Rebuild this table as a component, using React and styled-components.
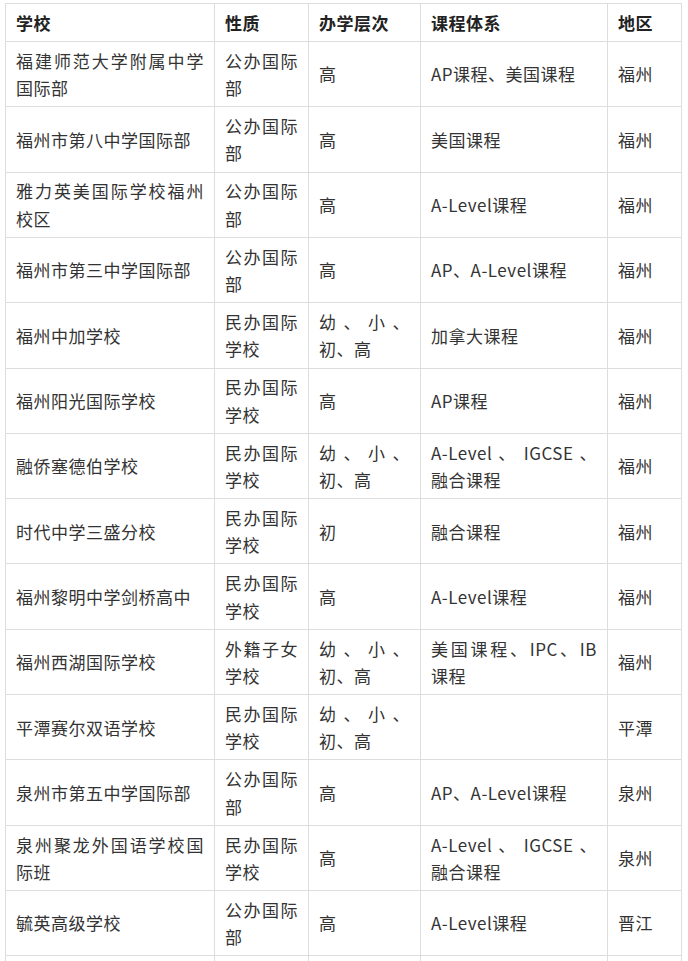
import React from "react";
import styled, { createGlobalStyle } from "styled-components";

const GlobalStyle = createGlobalStyle`
  body {
    margin: 0;
    background: #fff;
    font-family: "Noto Sans CJK SC", "Noto Sans", sans-serif;
  }
`;

const columns = [
  { key: "name", title: "学校", width: 209 },
  { key: "type", title: "性质", width: 94 },
  { key: "level", title: "办学层次", width: 112 },
  { key: "course", title: "课程体系", width: 187 },
  { key: "area", title: "地区", width: 74 },
];

const schools = [
  ["福建师范大学附属中学国际部", "公办国际部", "高", "AP课程、美国课程", "福州"],
  ["福州市第八中学国际部", "公办国际部", "高", "美国课程", "福州"],
  ["雅力英美国际学校福州校区", "公办国际部", "高", "A-Level课程", "福州"],
  ["福州市第三中学国际部", "公办国际部", "高", "AP、A-Level课程", "福州"],
  ["福州中加学校", "民办国际学校", "幼 、 小 、 初、高", "加拿大课程", "福州"],
  ["福州阳光国际学校", "民办国际学校", "高", "AP课程", "福州"],
  ["融侨塞德伯学校", "民办国际学校", "幼 、 小 、 初、高", "A-Level 、 IGCSE 、融合课程", "福州"],
  ["时代中学三盛分校", "民办国际学校", "初", "融合课程", "福州"],
  ["福州黎明中学剑桥高中", "民办国际学校", "高", "A-Level课程", "福州"],
  ["福州西湖国际学校", "外籍子女学校", "幼 、 小 、 初、高", "美国课程、IPC、IB课程", "福州"],
  ["平潭赛尔双语学校", "民办国际学校", "幼 、 小 、 初、高", "", "平潭"],
  ["泉州市第五中学国际部", "公办国际部", "高", "AP、A-Level课程", "泉州"],
  ["泉州聚龙外国语学校国际班", "民办国际学校", "高", "A-Level 、 IGCSE 、融合课程", "泉州"],
  ["毓英高级学校", "公办国际部", "高", "A-Level课程", "晋江"],
  // next row continues below the fold; only its borders show
  ["", "", "", "", ""],
];

export default function App() {
  return (
    <Page>
      <GlobalStyle />
      <Table>
        <colgroup>
          {columns.map((col) => (
            <col key={col.key} style={{ width: col.width }} />
          ))}
        </colgroup>
        <thead>
          <tr>
            {columns.map((col) => (
              <HeadCell key={col.key}>{col.title}</HeadCell>
            ))}
          </tr>
        </thead>
        <tbody>
          {schools.map((row, i) => (
            <tr key={i}>
              {row.map((text, j) => (
                <Cell key={j}>{text}</Cell>
              ))}
            </tr>
          ))}
        </tbody>
      </Table>
    </Page>
  );
}

const Page = styled.div`
  padding: 3px 0 0 5px;
  height: 961px;
  overflow: hidden;
  box-sizing: border-box;
`;

const Table = styled.table`
  width: 676px;
  table-layout: fixed;
  border-collapse: collapse;
  font-size: 17px;
  letter-spacing: 0.5px;
  line-height: 27.36px;
  color: #333;
`;

const Cell = styled.td`
  border: 1px solid #dddddd;
  padding: 4.8px 10px;
  height: 27.36px;
  text-align: justify;
  vertical-align: middle;
  word-break: break-all;
`;

const HeadCell = styled(Cell).attrs({ as: "th" })`
  font-weight: 700;
  color: #222;
  text-align: left;
`;
